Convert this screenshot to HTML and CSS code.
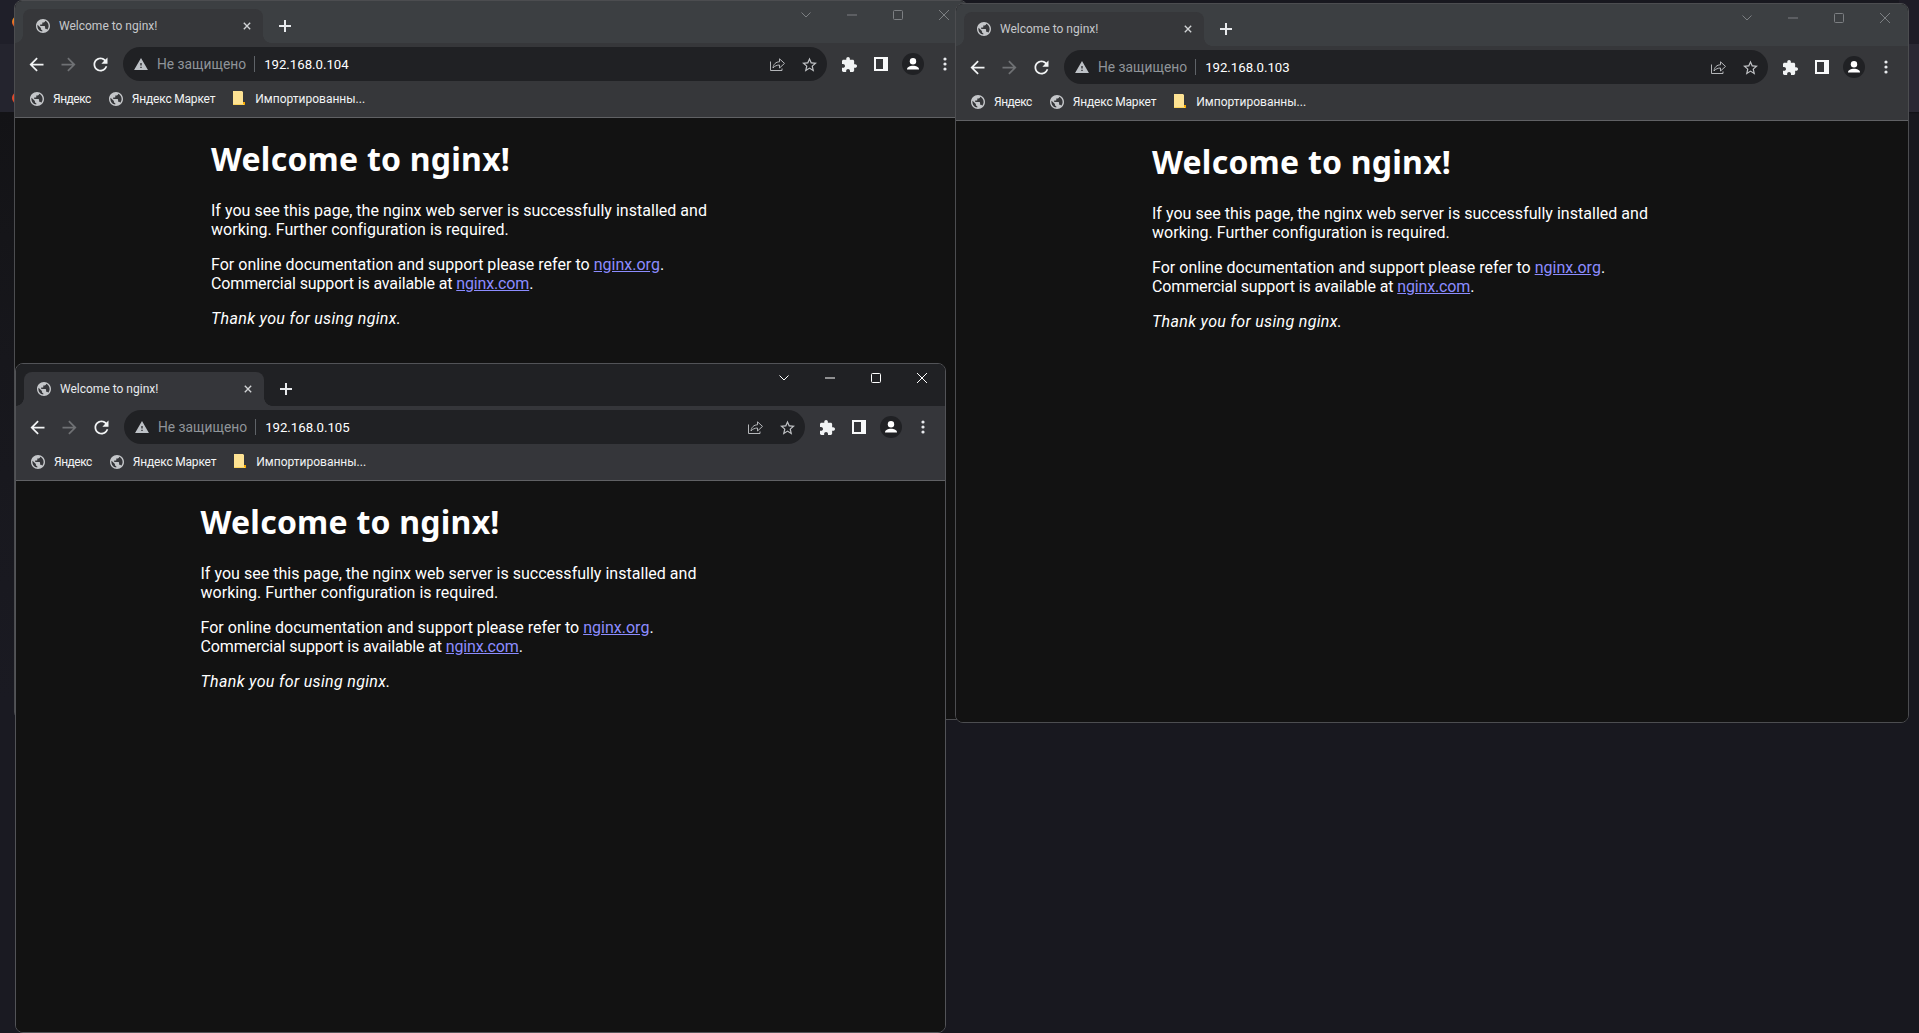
FILE: index.html
```html
<!DOCTYPE html>
<html lang="en">
<head>
    <meta charset="UTF-8">
    <title>Welcome to nginx!</title>
    <link rel="stylesheet" href="styles.css">
</head>
<body>
    <svg class="icon-defs" width="0" height="0">
        <symbol id="i-globe" viewBox="2 2 20 20"><path d="M12 2C6.48 2 2 6.48 2 12s4.48 10 10 10 10-4.48 10-10S17.52 2 12 2zm-1 17.93c-3.95-.49-7-3.85-7-7.93 0-.62.08-1.21.21-1.79L9 15v1c0 1.1.9 2 2 2v1.93zm6.9-2.54c-.26-.81-1-1.39-1.9-1.39h-1v-3c0-.55-.45-1-1-1H8v-2h2c.55 0 1-.45 1-1V7h2c1.1 0 2-.9 2-2v-.41c2.93 1.19 5 4.06 5 7.41 0 2.08-.8 3.97-2.1 5.39z"/></symbol>
        <symbol id="i-close" viewBox="0 0 10 10"><path d="M1 1l8 8M9 1l-8 8" fill="none" stroke="currentColor" stroke-width="1.7"/></symbol>
        <symbol id="i-plus" viewBox="0 0 12 12"><path d="M6 0v12M0 6h12" fill="none" stroke="currentColor" stroke-width="2"/></symbol>
        <symbol id="i-back" viewBox="0 0 24 24"><path d="M20 11H7.83l5.59-5.59L12 4l-8 8 8 8 1.41-1.41L7.83 13H20v-2z"/></symbol>
        <symbol id="i-forward" viewBox="0 0 24 24"><path d="M12 4l-1.41 1.41L16.17 11H4v2h12.17l-5.58 5.59L12 20l8-8z"/></symbol>
        <symbol id="i-reload" viewBox="0 0 24 24"><path d="M17.65 6.35C16.2 4.9 14.21 4 12 4c-4.42 0-7.99 3.58-7.99 8s3.57 8 7.99 8c3.73 0 6.84-2.55 7.73-6h-2.08c-.82 2.33-3.04 4-5.65 4-3.31 0-6-2.69-6-6s2.69-6 6-6c1.66 0 3.14.69 4.22 1.78L13 11h7V4l-2.35 2.35z"/></symbol>
        <symbol id="i-warn" viewBox="1 2 22 19"><path d="M1 21h22L12 2 1 21zm12-3h-2v-2h2v2zm0-4h-2v-4h2v4z"/></symbol>
        <symbol id="i-share" viewBox="0 0 16 16"><path d="M1.5 5.5v9H13v-2" fill="none" stroke="currentColor"/><path d="M4 12c.4-3.8 3-6.2 6.5-6.2V2.8l5 4.6-5 4.6V9C8 9 5.5 10 4 12z" fill="none" stroke="currentColor"/></symbol>
        <symbol id="i-star" viewBox="2 2 20 19"><path d="M22 9.24l-7.19-.62L12 2 9.19 8.63 2 9.24l5.46 4.73L5.82 21 12 17.27 18.18 21l-1.63-7.03L22 9.24zM12 15.4l-3.76 2.27 1-4.28-3.32-2.88 4.38-.38L12 6.1l1.71 4.04 4.38.38-3.32 2.88 1 4.28L12 15.4z"/></symbol>
        <symbol id="i-puzzle" viewBox="2 1 21 21"><path d="M20.5 11H19V7c0-1.1-.9-2-2-2h-4V3.5C13 2.12 11.88 1 10.5 1S8 2.12 8 3.5V5H4c-1.1 0-1.99.9-1.99 2v3.8H3.5c1.49 0 2.7 1.21 2.7 2.7s-1.21 2.7-2.7 2.7H2V20c0 1.1.9 2 2 2h3.8v-1.5c0-1.49 1.21-2.7 2.7-2.7 1.49 0 2.7 1.21 2.7 2.7V22H17c1.1 0 2-.9 2-2v-4h1.5c1.38 0 2.5-1.12 2.5-2.5S21.88 11 20.5 11z"/></symbol>
        <symbol id="i-panel" viewBox="0 0 14 14"><path fill-rule="evenodd" d="M0 0h14v14H0zM2 2v10h7V2z"/></symbol>
        <symbol id="i-person" viewBox="0 0 22 22"><circle cx="11" cy="11" r="11" fill="#202124"/><circle cx="11" cy="8.2" r="3.2" fill="#fff"/><path d="M5 16.5c0-2.6 3-3.7 6-3.7s6 1.1 6 3.7z" fill="#fff"/></symbol>
        <symbol id="i-dots" viewBox="0 0 4 14"><circle cx="2" cy="2" r="1.6"/><circle cx="2" cy="7" r="1.6"/><circle cx="2" cy="12" r="1.6"/></symbol>
        <symbol id="i-folder" viewBox="0 0 12 15"><path d="M0 0h9l1 1v12H0z" fill="#fde293"/><path d="M10 11h2v3h-2z" fill="#f9ab00"/><path d="M0 13h11v1H0z" fill="#fbd25c"/></symbol>
        <symbol id="i-chevron" viewBox="0 0 10 6"><path d="M.5.5L5 5l4.5-4.5" fill="none" stroke="currentColor"/></symbol>
        <symbol id="i-min" viewBox="0 0 10 10"><path d="M0 5h10" fill="none" stroke="currentColor"/></symbol>
        <symbol id="i-max" viewBox="0 0 10 10"><rect x=".5" y=".5" width="9" height="9" rx="1" fill="none" stroke="currentColor"/></symbol>
        <symbol id="i-x" viewBox="0 0 10 10"><path d="M0 0l10 10M10 0L0 10" fill="none" stroke="currentColor"/></symbol>
    </svg>

    <div class="behind behind-left"><span class="app-dot dot-one"></span><span class="app-dot dot-two"></span></div>
    <div class="behind behind-right"></div>

    <!-- 192.168.0.104 -->
    <section class="window inactive win-104">
        <div class="titlebar">
            <div class="tab">
                <svg class="favicon"><use href="#i-globe"/></svg>
                <span class="tab-title">Welcome to nginx!</span>
                <svg class="tab-close"><use href="#i-close"/></svg>
            </div>
            <svg class="new-tab"><use href="#i-plus"/></svg>
            <div class="controls">
                <span class="ctl"><svg class="ctl-chevron"><use href="#i-chevron"/></svg></span>
                <span class="ctl"><svg class="ctl-icon"><use href="#i-min"/></svg></span>
                <span class="ctl"><svg class="ctl-icon"><use href="#i-max"/></svg></span>
                <span class="ctl"><svg class="ctl-icon"><use href="#i-x"/></svg></span>
            </div>
        </div>
        <div class="toolbar">
            <span class="tool"><svg class="nav-icon"><use href="#i-back"/></svg></span>
            <span class="tool"><svg class="nav-icon off"><use href="#i-forward"/></svg></span>
            <span class="tool"><svg class="nav-icon"><use href="#i-reload"/></svg></span>
            <div class="omnibox">
                <svg class="warn"><use href="#i-warn"/></svg>
                <span class="not-secure">Не защищено</span>
                <span class="sep"></span>
                <span class="url">192.168.0.104</span>
                <span class="tool push"><svg class="share"><use href="#i-share"/></svg></span>
                <span class="tool"><svg class="star"><use href="#i-star"/></svg></span>
            </div>
            <span class="tool first-ext"><svg class="puzzle"><use href="#i-puzzle"/></svg></span>
            <span class="tool"><svg class="panel"><use href="#i-panel"/></svg></span>
            <span class="tool"><svg class="avatar"><use href="#i-person"/></svg></span>
            <span class="tool"><svg class="dots"><use href="#i-dots"/></svg></span>
        </div>
        <div class="bookmarks">
            <span class="bm"><svg class="favicon"><use href="#i-globe"/></svg><span class="bm-name short">Яндекс</span></span>
            <span class="bm"><svg class="favicon"><use href="#i-globe"/></svg><span class="bm-name">Яндекс Маркет</span></span>
            <span class="bm"><svg class="folder"><use href="#i-folder"/></svg><span class="bm-folder">Импортированны...</span></span>
        </div>
        <div class="page">
            <div class="doc">
                <h1>Welcome to nginx!</h1>
                <p>If you see this page, the nginx web server is successfully installed and<br>working. Further configuration is required.</p>
                <p>For online documentation and support please refer to <a href="#">nginx.org</a>.<br><span class="tight">Commercial support is available at <a href="#">nginx.com</a>.</span></p>
                <p><em>Thank you for using nginx.</em></p>
            </div>
        </div>
    </section>

    <!-- 192.168.0.103 -->
    <section class="window inactive win-103">
        <div class="titlebar">
            <div class="tab">
                <svg class="favicon"><use href="#i-globe"/></svg>
                <span class="tab-title">Welcome to nginx!</span>
                <svg class="tab-close"><use href="#i-close"/></svg>
            </div>
            <svg class="new-tab"><use href="#i-plus"/></svg>
            <div class="controls">
                <span class="ctl"><svg class="ctl-chevron"><use href="#i-chevron"/></svg></span>
                <span class="ctl"><svg class="ctl-icon"><use href="#i-min"/></svg></span>
                <span class="ctl"><svg class="ctl-icon"><use href="#i-max"/></svg></span>
                <span class="ctl"><svg class="ctl-icon"><use href="#i-x"/></svg></span>
            </div>
        </div>
        <div class="toolbar">
            <span class="tool"><svg class="nav-icon"><use href="#i-back"/></svg></span>
            <span class="tool"><svg class="nav-icon off"><use href="#i-forward"/></svg></span>
            <span class="tool"><svg class="nav-icon"><use href="#i-reload"/></svg></span>
            <div class="omnibox">
                <svg class="warn"><use href="#i-warn"/></svg>
                <span class="not-secure">Не защищено</span>
                <span class="sep"></span>
                <span class="url">192.168.0.103</span>
                <span class="tool push"><svg class="share"><use href="#i-share"/></svg></span>
                <span class="tool"><svg class="star"><use href="#i-star"/></svg></span>
            </div>
            <span class="tool first-ext"><svg class="puzzle"><use href="#i-puzzle"/></svg></span>
            <span class="tool"><svg class="panel"><use href="#i-panel"/></svg></span>
            <span class="tool"><svg class="avatar"><use href="#i-person"/></svg></span>
            <span class="tool"><svg class="dots"><use href="#i-dots"/></svg></span>
        </div>
        <div class="bookmarks">
            <span class="bm"><svg class="favicon"><use href="#i-globe"/></svg><span class="bm-name short">Яндекс</span></span>
            <span class="bm"><svg class="favicon"><use href="#i-globe"/></svg><span class="bm-name">Яндекс Маркет</span></span>
            <span class="bm"><svg class="folder"><use href="#i-folder"/></svg><span class="bm-folder">Импортированны...</span></span>
        </div>
        <div class="page">
            <div class="doc">
                <h1>Welcome to nginx!</h1>
                <p>If you see this page, the nginx web server is successfully installed and<br>working. Further configuration is required.</p>
                <p>For online documentation and support please refer to <a href="#">nginx.org</a>.<br><span class="tight">Commercial support is available at <a href="#">nginx.com</a>.</span></p>
                <p><em>Thank you for using nginx.</em></p>
            </div>
        </div>
    </section>

    <!-- 192.168.0.105, the focused one -->
    <section class="window win-105">
        <div class="titlebar">
            <div class="tab">
                <svg class="favicon"><use href="#i-globe"/></svg>
                <span class="tab-title">Welcome to nginx!</span>
                <svg class="tab-close"><use href="#i-close"/></svg>
            </div>
            <svg class="new-tab"><use href="#i-plus"/></svg>
            <div class="controls">
                <span class="ctl"><svg class="ctl-chevron"><use href="#i-chevron"/></svg></span>
                <span class="ctl"><svg class="ctl-icon"><use href="#i-min"/></svg></span>
                <span class="ctl"><svg class="ctl-icon"><use href="#i-max"/></svg></span>
                <span class="ctl"><svg class="ctl-icon"><use href="#i-x"/></svg></span>
            </div>
        </div>
        <div class="toolbar">
            <span class="tool"><svg class="nav-icon"><use href="#i-back"/></svg></span>
            <span class="tool"><svg class="nav-icon off"><use href="#i-forward"/></svg></span>
            <span class="tool"><svg class="nav-icon"><use href="#i-reload"/></svg></span>
            <div class="omnibox">
                <svg class="warn"><use href="#i-warn"/></svg>
                <span class="not-secure">Не защищено</span>
                <span class="sep"></span>
                <span class="url">192.168.0.105</span>
                <span class="tool push"><svg class="share"><use href="#i-share"/></svg></span>
                <span class="tool"><svg class="star"><use href="#i-star"/></svg></span>
            </div>
            <span class="tool first-ext"><svg class="puzzle"><use href="#i-puzzle"/></svg></span>
            <span class="tool"><svg class="panel"><use href="#i-panel"/></svg></span>
            <span class="tool"><svg class="avatar"><use href="#i-person"/></svg></span>
            <span class="tool"><svg class="dots"><use href="#i-dots"/></svg></span>
        </div>
        <div class="bookmarks">
            <span class="bm"><svg class="favicon"><use href="#i-globe"/></svg><span class="bm-name short">Яндекс</span></span>
            <span class="bm"><svg class="favicon"><use href="#i-globe"/></svg><span class="bm-name">Яндекс Маркет</span></span>
            <span class="bm"><svg class="folder"><use href="#i-folder"/></svg><span class="bm-folder">Импортированны...</span></span>
        </div>
        <div class="page">
            <div class="doc">
                <h1>Welcome to nginx!</h1>
                <p>If you see this page, the nginx web server is successfully installed and<br>working. Further configuration is required.</p>
                <p>For online documentation and support please refer to <a href="#">nginx.org</a>.<br><span class="tight">Commercial support is available at <a href="#">nginx.com</a>.</span></p>
                <p><em>Thank you for using nginx.</em></p>
            </div>
        </div>
    </section>
</body>
</html>
```
FILE: styles.css
```css
* {
    box-sizing: border-box;
}
html, body {
    height: 100%;
}
body {
    margin: 0;
    background-color: #18181f;
    font-family: Roboto, sans-serif;
    overflow: hidden;
    position: relative;
}
svg {
    display: block;
    flex: none;
}
.icon-defs {
    position: absolute;
}

/* bits of other windows showing at the screen edges */
.behind {
    position: absolute;
    top: 0;
    height: 100%;
    overflow: hidden;
}
.behind-left {
    left: 0;
    width: 20px;
    background: linear-gradient(#1f1f29 44px, #24242e 44px, #24242e 112px, #131316 112px, #17171c 360px, #1a1a22 700px);
}
.behind-right {
    right: 0;
    width: 20px;
    background: linear-gradient(#1e1c26 44px, #2a2833 44px, #2a2833 112px, #101014 112px, #18181e 114px, #18181f 400px);
}
.app-dot {
    position: absolute;
    width: 12px;
    height: 12px;
    border-radius: 50%;
    background: linear-gradient(#f5a623, #e0452a);
}
.dot-one {
    left: 12px;
    top: 16px;
}
.dot-two {
    left: 12px;
    top: 92px;
    background: #e2492b;
}

/* windows */
.window {
    --frame: #202124;
    --tab: #35363a;
    --ctl: #fff;
    --title: #e8eaed;
    position: absolute;
    display: flex;
    flex-direction: column;
    border: 1px solid #525357;
    border-radius: 8px;
    overflow: hidden;
    background-color: #121212;
}
.inactive {
    --frame: #3c3f42;
    --tab: #36373a;
    --ctl: #7c7f82;
    --title: #c6c8cb;
    border-color: #4c4d50;
}
.win-104 {
    left: 14px;
    top: 0;
    width: 954px;
    height: 720px;
}
.win-103 {
    left: 955px;
    top: 3px;
    width: 954px;
    height: 720px;
}
.win-105 {
    left: 15px;
    top: 363px;
    width: 931px;
    height: 670px;
}

.titlebar {
    display: flex;
    align-items: flex-start;
    height: 42px;
    flex: none;
    background-color: var(--frame);
}
.tab {
    position: relative;
    display: flex;
    align-items: center;
    width: 240px;
    height: 34px;
    margin: 8px 0 0 8px;
    padding: 0 12px 0 13px;
    border-radius: 8px 8px 0 0;
    background-color: var(--tab);
}
.tab::before, .tab::after {
    content: "";
    position: absolute;
    bottom: 0;
    width: 8px;
    height: 8px;
}
.tab::before {
    left: -8px;
    background: radial-gradient(circle at 0 0, transparent 7.5px, var(--tab) 8px);
}
.tab::after {
    right: -8px;
    background: radial-gradient(circle at 100% 0, transparent 7.5px, var(--tab) 8px);
}
.favicon {
    width: 14px;
    height: 14px;
    fill: #c4c6c9;
}
.tab-title {
    margin-left: 9px;
    font-size: 12px;
    color: var(--title);
}
.tab-close {
    width: 8px;
    height: 8px;
    margin-left: auto;
    color: #d2d4d6;
}
.new-tab {
    width: 12px;
    height: 12px;
    margin: 19px 0 0 16px;
    color: #e8eaed;
}
.controls {
    display: flex;
    margin-left: auto;
    color: var(--ctl);
}
.ctl {
    display: flex;
    align-items: center;
    justify-content: center;
    width: 46px;
    height: 28px;
}
.ctl-icon {
    width: 10px;
    height: 10px;
}
.ctl-chevron {
    width: 10px;
    height: 6px;
}

.toolbar {
    display: flex;
    align-items: center;
    flex: none;
    height: 41px;
    padding: 4px 6px 3px 5px;
    background-color: var(--tab);
}
.tool {
    display: flex;
    align-items: center;
    justify-content: center;
    width: 32px;
    height: 34px;
    flex: none;
}
.nav-icon {
    width: 21px;
    height: 21px;
    fill: #f1f3f4;
}
.nav-icon.off {
    fill: #6f7174;
}
.omnibox {
    display: flex;
    align-items: center;
    flex: 1;
    height: 34px;
    margin-left: 7px;
    padding: 0 2px 0 11px;
    border-radius: 17px;
    background-color: #202124;
}
.warn {
    width: 14px;
    height: 12px;
    fill: #bdc1c6;
}
.not-secure {
    margin-left: 9px;
    font-size: 13.8px;
    color: #8f9499;
}
.sep {
    width: 1px;
    height: 16px;
    margin: 0 9px 0 8px;
    background-color: #5f6368;
}
.url {
    font-size: 13.2px;
    color: #fff;
}
.push {
    margin-left: auto;
}
.share {
    width: 16px;
    height: 16px;
    color: #b4b6b9;
}
.star {
    width: 15px;
    height: 15px;
    fill: #bfc1c4;
}
.first-ext {
    margin-left: 6px;
}
.puzzle {
    width: 15px;
    height: 15px;
    fill: #f1f3f4;
}
.panel {
    width: 14px;
    height: 14px;
    fill: #f8f9fa;
}
.avatar {
    width: 22px;
    height: 22px;
}
.dots {
    width: 4px;
    height: 14px;
    fill: #e8eaed;
}

.bookmarks {
    display: flex;
    align-items: center;
    gap: 18px;
    flex: none;
    height: 34px;
    padding: 0 0 4px 15px;
    border-bottom: 1px solid #606164;
    background-color: var(--tab);
}
.bm {
    display: flex;
    align-items: center;
    font-size: 12px;
    color: #f1f3f4;
}
.bm-name {
    margin-left: 9px;
    letter-spacing: -0.2px;
}
.bm-name.short {
    letter-spacing: -0.5px;
}
.bm-folder {
    margin-left: 10px;
}
.folder {
    width: 12px;
    height: 15px;
}

/* the nginx page */
.page {
    flex: 1;
    background-color: #121212;
    color: #fff;
    overflow: hidden;
}
.doc {
    width: 560px;
    margin: 0 auto;
    padding-top: 21px;
    font-family: Roboto, sans-serif;
    font-size: 16px;
    line-height: 19px;
    letter-spacing: 0.02px;
}
h1 {
    margin: 0 0 23px;
    font-family: "Noto Sans", sans-serif;
    font-size: 32px;
    line-height: 39px;
    font-weight: 700;
    letter-spacing: 0.23px;
}
p {
    margin: 0 0 16px;
}
.tight {
    letter-spacing: -0.14px;
}
em {
    letter-spacing: 0.33px;
}
a {
    color: #8c8cff;
}
```
